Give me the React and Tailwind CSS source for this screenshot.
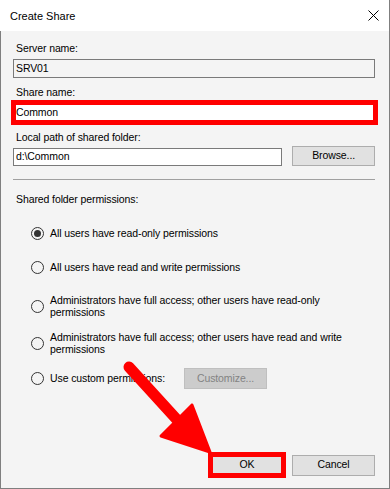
import React from 'react';

const Label = ({ children, className = '' }) => (
  <p className={`text-[10.5px] leading-[13px] tracking-[-0.1px] text-black pl-[3px] ${className}`}>
    {children}
  </p>
);

const Radio = ({ checked, children, className = '' }) => (
  <div className={`flex items-center pl-[18px] ${className}`}>
    <span className="w-[13px] h-[13px] rounded-full border border-[#333333] bg-[#f4f4f4] flex items-center justify-center shrink-0">
      {checked && <span className="w-[7px] h-[7px] rounded-full bg-[#333333]" />}
    </span>
    <span className="ml-[6px] text-[10.5px] leading-[11.5px] tracking-[-0.1px] text-black whitespace-nowrap">
      {children}
    </span>
  </div>
);

const Arrow = () => (
  <svg
    className="absolute inset-0 pointer-events-none"
    width="390"
    height="489"
    viewBox="0 0 390 489"
  >
    <line x1="129" y1="367" x2="180" y2="423" stroke="#ff0000" strokeWidth="11" strokeLinecap="round" />
    <polygon
      points="192,405 161,436 210,452"
      fill="#ff0000"
      stroke="#ff0000"
      strokeWidth="3"
      strokeLinejoin="round"
    />
  </svg>
);

const App = () => {
  return (
    <div className="relative w-[390px] h-[489px] bg-white border-r border-[#7f7f7f] font-['Liberation_Sans',Arial,sans-serif] flex flex-col">
      <div className="h-[31px] flex items-center justify-between pl-[10px] pr-[10px] bg-white">
        <span className="text-[11px] leading-[13px] text-black pt-[1px]">Create Share</span>
        <svg width="11" height="11" viewBox="0 0 11 11">
          <path d="M0.5 0.5 L10.5 10.5 M10.5 0.5 L0.5 10.5" stroke="#000" strokeWidth="1" />
        </svg>
      </div>

      <div className="flex-1 flex flex-col bg-[#f4f4f4] border-l border-b border-[#7f7f7f] pl-[12px] pr-[14px]">
        <Label className="mt-[11px]">Server name:</Label>
        <div className="mt-[4px] h-[19px] w-[362px] border border-[#7a7a7a] bg-[#f4f4f4] flex items-center pl-[2px] text-[10.5px] tracking-[-0.1px] text-black">
          SRV01
        </div>

        <Label className="mt-[8px]">Share name:</Label>
        <div className="mt-[1px] -ml-[2px] h-[25px] w-[367px] border-[5px] border-[#ff0000] bg-white flex items-center text-[10.5px] tracking-[-0.1px] text-black">
          Common
        </div>

        <Label className="mt-[6px]">Local path of shared folder:</Label>
        <div className="mt-[2px] flex items-end">
          <div className="h-[18px] w-[270px] border border-[#7a7a7a] bg-white flex items-center pl-[2px] text-[10.5px] tracking-[-0.1px] text-black">
            d:\Common
          </div>
          <button className="ml-[10px] h-[20px] w-[83px] border border-[#adadad] bg-[#e1e1e1] text-[10.5px] tracking-[-0.1px] text-black">
            Browse...
          </button>
        </div>

        <div className="mt-[13px] h-px w-[362px] bg-[#a0a0a0]" />

        <Label className="mt-[13px]">Shared folder permissions:</Label>

        <Radio checked className="mt-[21px] h-[13px]">All users have read-only permissions</Radio>
        <Radio className="mt-[21px] h-[13px]">All users have read and write permissions</Radio>
        <Radio className="mt-[21px] h-[23px]">
          Administrators have full access; other users have read-only
          <br />
          permissions
        </Radio>
        <Radio className="mt-[14px] h-[23px]">
          Administrators have full access; other users have read and write
          <br />
          permissions
        </Radio>
        <div className="mt-[13px] h-[21px] flex items-center">
          <Radio className="h-[13px]">Use custom permissions:</Radio>
          <button className="ml-[19px] h-[21px] w-[83px] border border-[#bfbfbf] bg-[#cccccc] text-[10.5px] tracking-[-0.1px] text-[#838383]">
            Customize...
          </button>
        </div>

        <div className="flex-1" />

        <div className="flex items-center justify-end pb-[10px]">
          <button className="h-[26px] w-[78px] border-[5px] border-[#ff0000] bg-[#e1e1e1] text-[10.5px] tracking-[-0.1px] text-black">
            OK
          </button>
          <button className="ml-[6px] h-[21px] w-[83px] border border-[#adadad] bg-[#e1e1e1] text-[10.5px] tracking-[-0.1px] text-black">
            Cancel
          </button>
        </div>
      </div>

      <Arrow />
    </div>
  );
};

export default App;
